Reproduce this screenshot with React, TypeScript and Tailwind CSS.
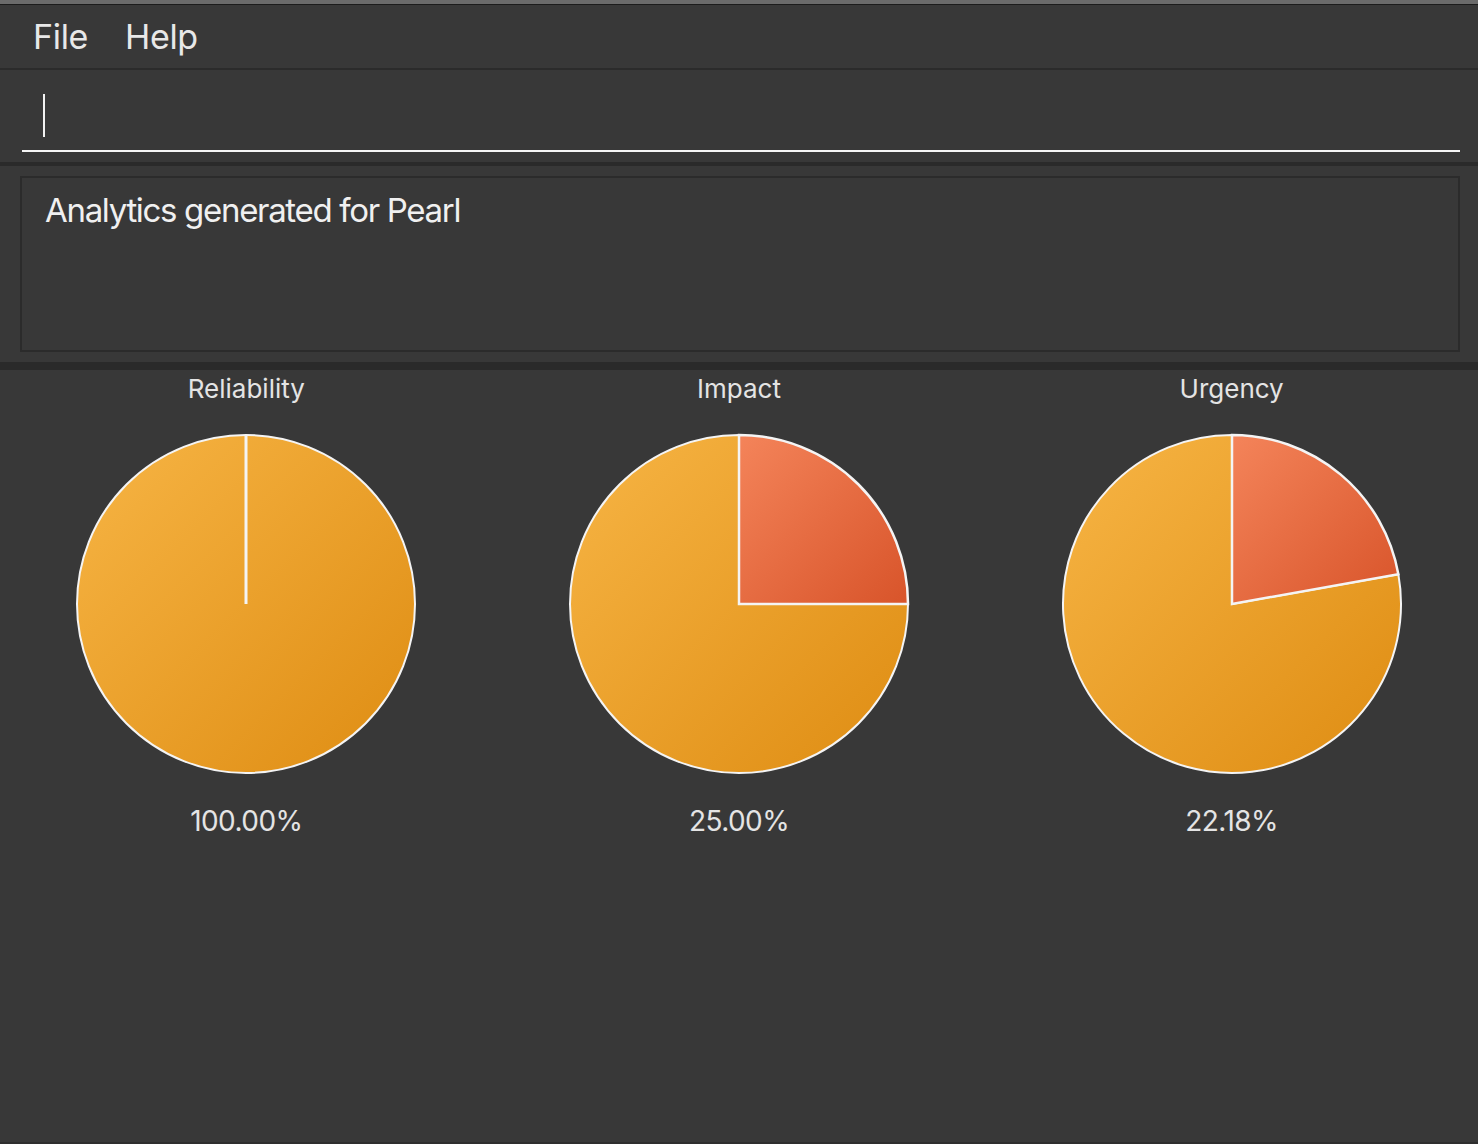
import React from "react";

type Chart = {
  title: string;
  value: number; // fraction of the red slice, 0..1
  label: string;
};

const charts: Chart[] = [
  { title: "Reliability", value: 0, label: "100.00%" },
  { title: "Impact", value: 0.25, label: "25.00%" },
  { title: "Urgency", value: 0.2218, label: "22.18%" },
];

const R = 169;
const C = 172;

// point on circle, angle measured clockwise from 12 o'clock
function pt(frac: number) {
  const a = frac * Math.PI * 2;
  return [C + R * Math.sin(a), C - R * Math.cos(a)];
}

function slicePath(from: number, to: number) {
  const [x0, y0] = pt(from);
  const [x1, y1] = pt(to);
  const large = to - from > 0.5 ? 1 : 0;
  return `M ${C} ${C} L ${x0} ${y0} A ${R} ${R} 0 ${large} 1 ${x1} ${y1} Z`;
}

function Pie({ value, id }: { value: number; id: string }) {
  return (
    <svg width={C * 2} height={C * 2} viewBox={`0 0 ${C * 2} ${C * 2}`}>
      <defs>
        <linearGradient id={`o-${id}`} x1="0" y1="0" x2="1" y2="1">
          <stop offset="0%" stopColor="#f7b545" />
          <stop offset="100%" stopColor="#de8c12" />
        </linearGradient>
        <linearGradient id={`r-${id}`} x1="0" y1="0" x2="1" y2="1">
          <stop offset="0%" stopColor="#f4845a" />
          <stop offset="100%" stopColor="#d8542a" />
        </linearGradient>
      </defs>
      {value === 0 ? (
        <>
          <circle cx={C} cy={C} r={R} fill={`url(#o-${id})`} stroke="#f4f4f4" strokeWidth={2} />
          <line x1={C} y1={C} x2={C} y2={C - R} stroke="#f4f4f4" strokeWidth={3} />
        </>
      ) : (
        <>
          <path d={slicePath(value, 1)} fill={`url(#o-${id})`} stroke="#f4f4f4" strokeWidth={2} strokeLinejoin="round" />
          <path d={slicePath(0, value)} fill={`url(#r-${id})`} stroke="#f4f4f4" strokeWidth={2.5} strokeLinejoin="miter" />
        </>
      )}
    </svg>
  );
}

export default function App() {
  return (
    <div
      className="w-[1478px] h-[1144px] bg-[#383838] flex flex-col overflow-hidden text-[#ececec]"
      style={{ fontFamily: "Inter, 'Noto Sans', sans-serif" }}
    >
      {/* window top edge */}
      <div className="h-[4px] bg-[#6b6b6b] shrink-0" />
      <div className="h-[1px] bg-[#1c1c1c] shrink-0" />

      {/* Menu bar */}
      <div className="h-[63px] shrink-0 flex items-center pl-[33px] gap-[37px] text-[34px] tracking-[-0.01em] text-[#e8e8e8]">
        <span>File</span>
        <span>Help</span>
      </div>
      <div className="h-[2px] bg-[#2b2b2b] shrink-0" />

      {/* Command box */}
      <div className="h-[92px] shrink-0 pl-[22px] pr-[18px] pt-[24px]">
        <div className="h-[58px] border-b-2 border-[#f6f6f6] pl-[21px]">
          <div className="w-[2px] h-[43px] bg-[#f2f2f2]" />
        </div>
      </div>
      <div className="h-[4px] bg-[#2a2a2a] shrink-0" />

      {/* Result display */}
      <div className="h-[196px] shrink-0 pt-[10px] pl-[20px] pr-[18px]">
        <div className="h-[176px] border-2 border-[#2b2b2b] pl-[23px] pt-[8px] text-[33px] tracking-[-0.04em] text-[#f0f0f0]">
          Analytics generated for Pearl
        </div>
      </div>
      <div className="h-[8px] bg-[#2a2a2a] shrink-0" />

      {/* Charts */}
      <div className="flex-1 grid grid-cols-3">
        {charts.map((c) => (
          <div key={c.title} className="flex flex-col items-center">
            <div className="mt-[2px] text-[26px] leading-[34px] text-[#e4e4e4]">{c.title}</div>
            <div className="mt-[26px]">
              <Pie value={c.value} id={c.title} />
            </div>
            <div className="mt-[27px] text-[28px] leading-[36px] tracking-[-0.02em] text-[#e4e4e4]">{c.label}</div>
          </div>
        ))}
      </div>
      <div className="h-[2px] bg-[#2e2e2e] shrink-0" />
    </div>
  );
}
